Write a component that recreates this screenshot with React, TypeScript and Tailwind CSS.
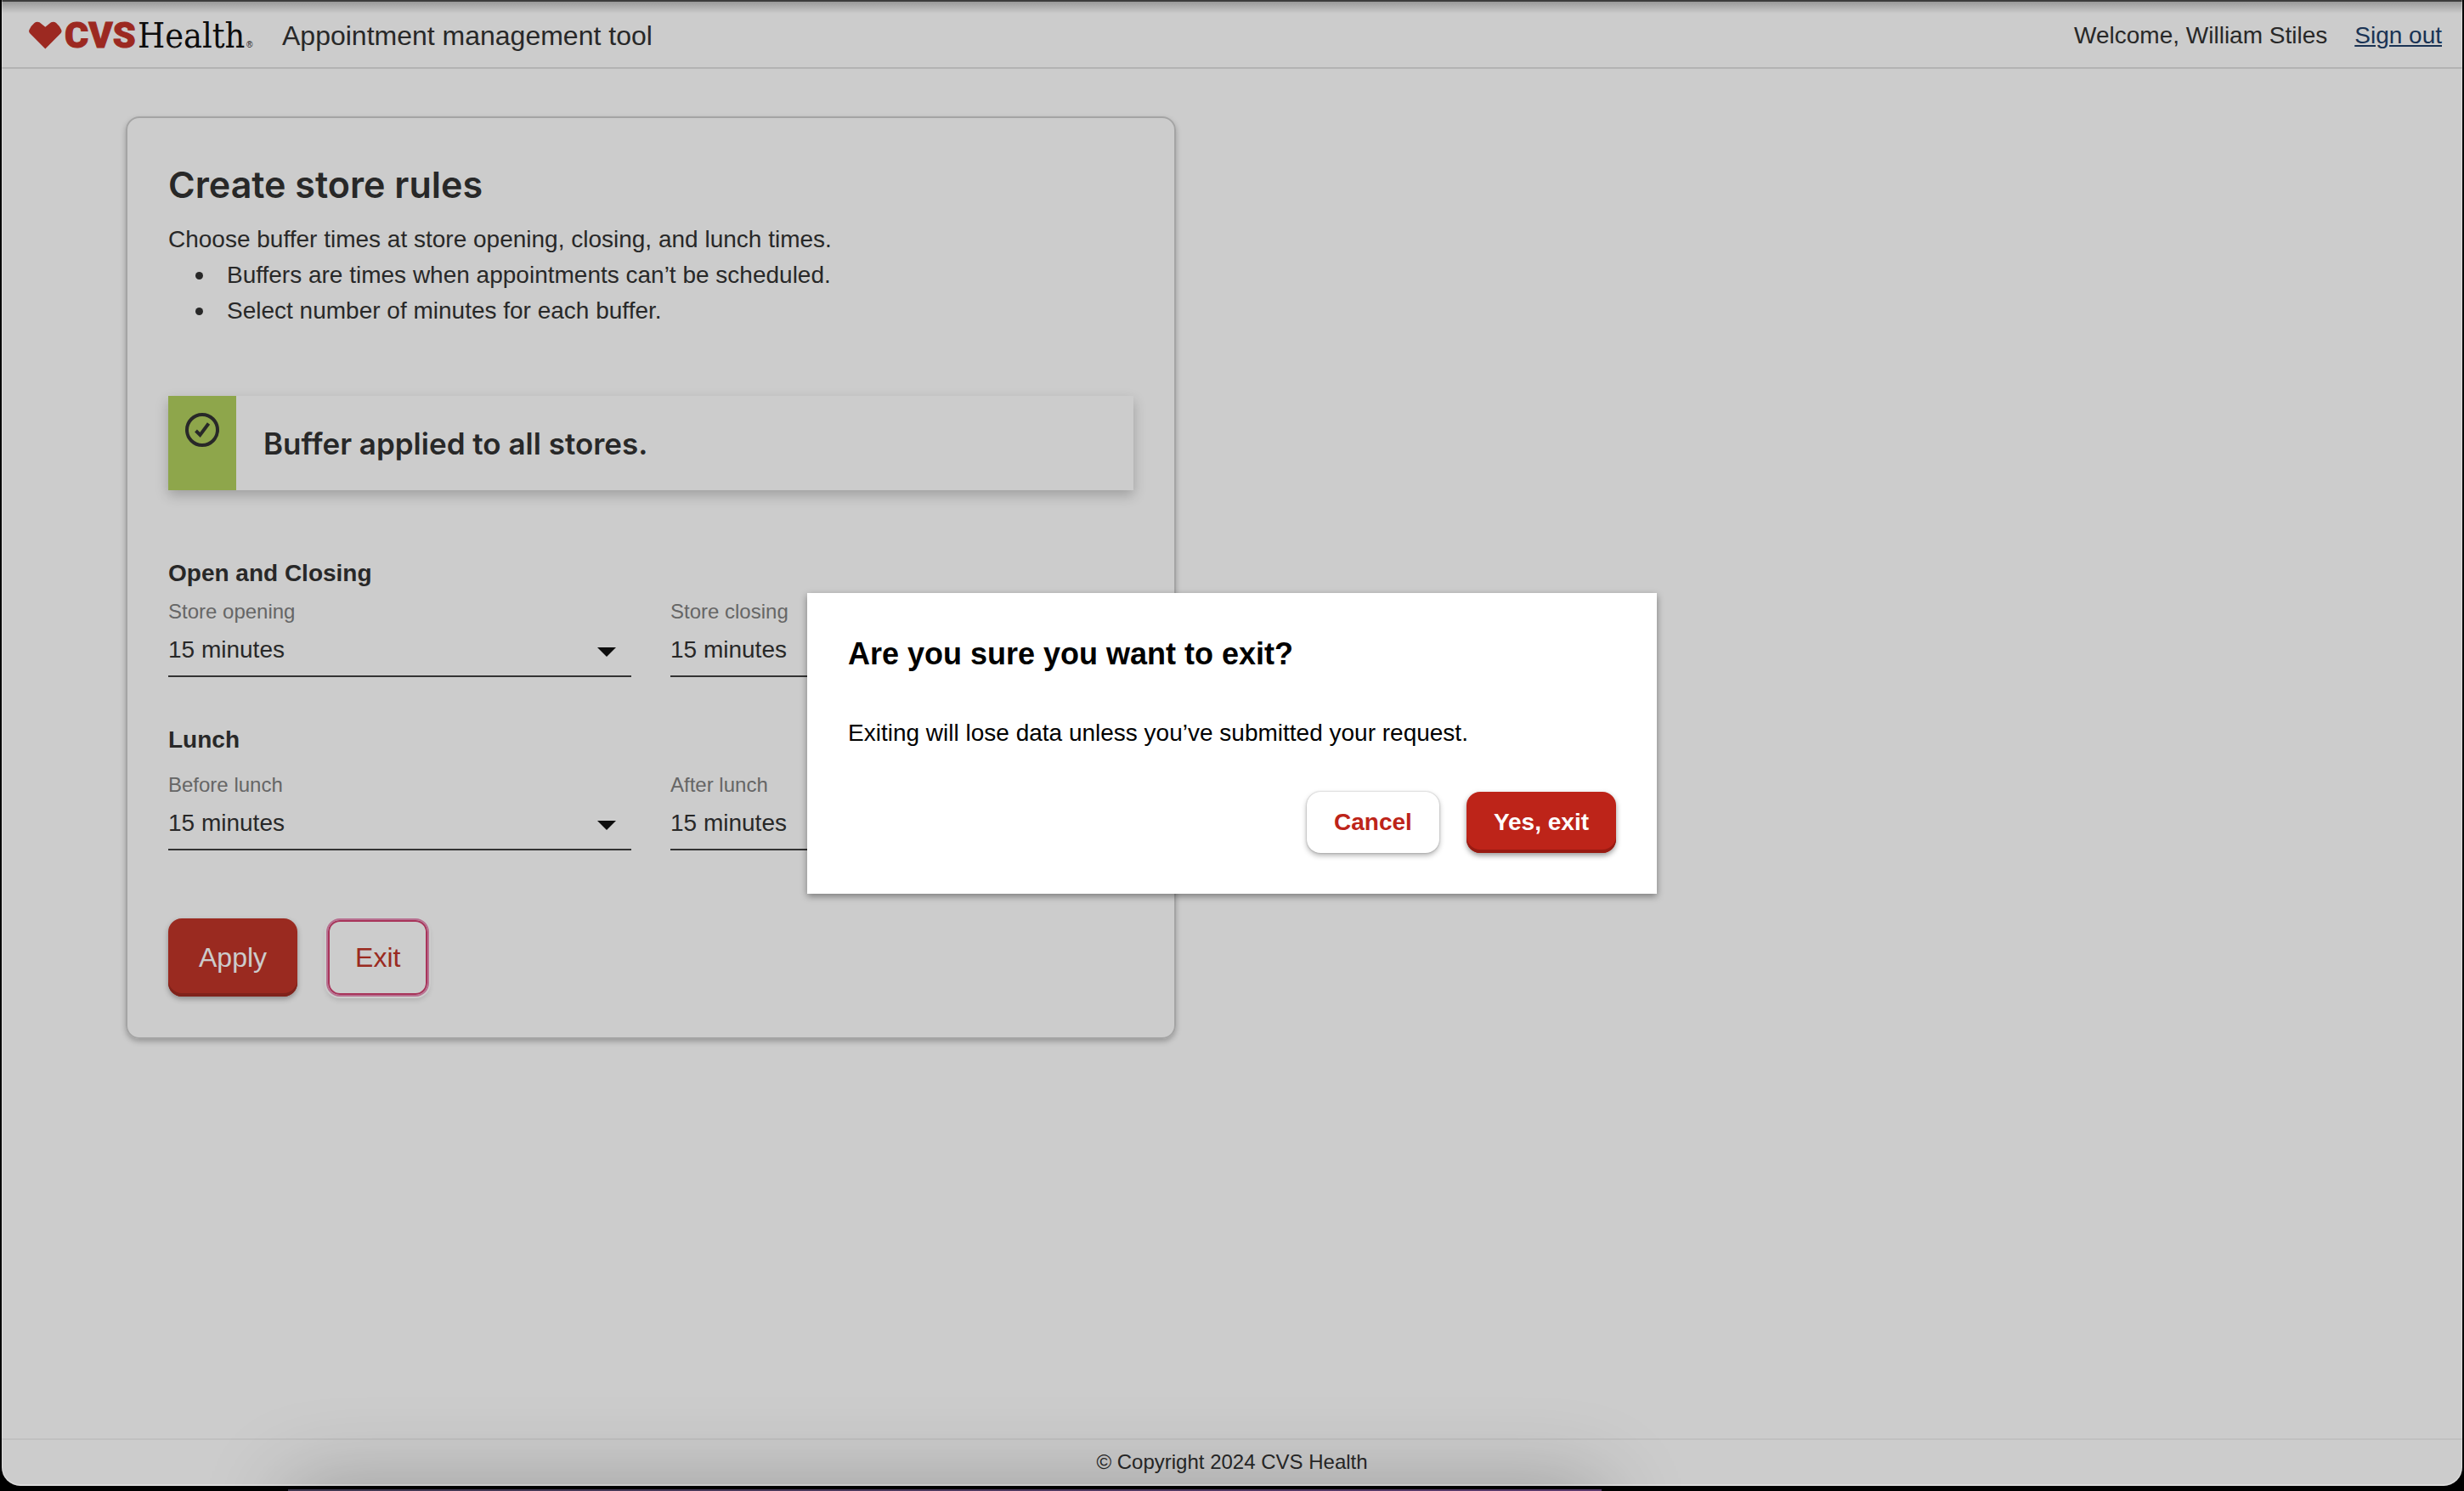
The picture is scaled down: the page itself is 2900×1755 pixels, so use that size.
import React from "react";

function Logo() {
  return (
    <svg
      role="img"
      aria-label="CVS Health"
      className="h-[60px] w-[266px] shrink-0"
      viewBox="0 0 266 60"
    >
      <path
        transform="translate(-1 8)"
        d="M20.300 37.500L2.200 19.300Q0.300 17.200 1.600 14.700Q3.600 10.400 7.500 7Q10 4.900 13.500 6.200L20.300 11.800L27.100 6.200Q30.600 4.900 33.100 7Q37 10.400 39 14.700Q40.300 17.200 38.400 19.300Z"
        fill="#c3342a"
      />
      <text
        x="42"
        y="44"
        fill="#c3342a"
        stroke="#c3342a"
        strokeWidth="1"
        className="font-['Roboto'] text-[43px] font-black"
      >
        CVS
      </text>
      <text
        x="128"
        y="44"
        fill="#111111"
        className="font-['DejaVu_Serif_Condensed','DejaVu_Serif',serif] text-[41px]"
      >
        Health
      </text>
      <text x="256" y="44" fill="#111111" className="font-['Liberation_Sans'] text-[10px]">
        ®
      </text>
    </svg>
  );
}

function MinutesSelect({ id, label }: { id: string; label: string }) {
  return (
    <div className="flex flex-col">
      <label htmlFor={id} className="text-[24px] leading-[30px] text-[#808080]">
        {label}
      </label>
      <div className="relative">
        <select
          id={id}
          defaultValue="15"
          className="block h-[62px] w-full appearance-none border-b-2 border-[#404040] bg-transparent text-[28px] text-[#333333]"
        >
          <option value="0">0 minutes</option>
          <option value="15">15 minutes</option>
          <option value="30">30 minutes</option>
        </select>
        <svg
          aria-hidden="true"
          viewBox="0 0 22 11"
          className="pointer-events-none absolute top-[27px] right-[18px] h-[11px] w-[22px]"
        >
          <path d="M0 0H22L11 11Z" fill="#111111" />
        </svg>
      </div>
    </div>
  );
}

function Bullet({ children }: { children: React.ReactNode }) {
  return (
    <li className="flex items-center gap-7 before:size-[9px] before:rounded-full before:bg-[#333333]">
      {children}
    </li>
  );
}

export default function App() {
  return (
    <div className="flex min-h-screen flex-col bg-black px-[2px] pb-[6px] font-['Liberation_Sans',Arial,sans-serif] text-[28px] text-[#333333]">
      <div className="relative flex grow flex-col overflow-hidden rounded-b-[22px] bg-white">
        <header className="flex h-[81px] items-center border-b-2 border-[#e0e0e0] pt-1 pr-6 pl-8">
          <Logo />
          <p className="ml-8 text-[32px] leading-10">Appointment management tool</p>
          <div className="ml-auto flex items-center gap-8 leading-10">
            <span>Welcome, William Stiles</span>
            <a href="#sign-out" className="text-[#21406a] underline decoration-2 underline-offset-2">
              Sign out
            </a>
          </div>
        </header>

        <main className="grow px-[146px] pt-14">
          <section className="w-full max-w-[1236px] rounded-2xl border-2 border-[#cecece] p-12 shadow-[0_3px_6px_rgba(0,0,0,0.25)]">
            <h1 className="font-['Inter'] text-[43px] leading-[60px] font-semibold">
              Create store rules
            </h1>
            <p className="mt-[14px] leading-[42px]">
              Choose buffer times at store opening, closing, and lunch times.
            </p>
            <ul className="pl-8 leading-[42px]">
              <Bullet>Buffers are times when appointments can’t be scheduled.</Bullet>
              <Bullet>Select number of minutes for each buffer.</Bullet>
            </ul>

            <div
              role="status"
              className="mt-[79px] flex min-h-[111px] shadow-[0_6px_14px_rgba(0,0,0,0.22)]"
            >
              <div className="flex w-20 shrink-0 justify-center bg-[#b2d05e] pt-5">
                <svg aria-hidden="true" viewBox="0 0 40 40" className="h-10 w-10" fill="none" stroke="#333333">
                  <circle cx="20" cy="20" r="18" strokeWidth="4" />
                  <path d="M12.500 21L17.500 26L27.500 12.500" strokeWidth="4" />
                </svg>
              </div>
              <p className="flex grow items-center bg-white px-8 font-['Inter'] text-[35px] leading-12 font-semibold">
                Buffer applied to all stores.
              </p>
            </div>

            <h2 className="mt-20 leading-9 font-bold">Open and Closing</h2>
            <div className="mt-3 grid grid-cols-2 gap-[46px]">
              <MinutesSelect id="opening" label="Store opening" />
              <MinutesSelect id="closing" label="Store closing" />
            </div>

            <h2 className="mt-14 leading-9 font-bold">Lunch</h2>
            <div className="mt-5 grid grid-cols-2 gap-[46px]">
              <MinutesSelect id="before" label="Before lunch" />
              <MinutesSelect id="after" label="After lunch" />
            </div>

            <div className="mt-20 flex gap-[34px] text-[32px]">
              <button
                type="button"
                className="h-[92px] rounded-2xl bg-[#c13528] px-9 text-white shadow-[inset_0_-4px_0_#a02c22,0_3px_6px_rgba(0,0,0,0.3)]"
              >
                Apply
              </button>
              <button
                type="button"
                className="h-[92px] rounded-2xl border-2 border-[#e68cb5] bg-white px-8 text-[#c13528] shadow-[inset_0_0_0_2px_#d24171,0_0_0_2px_#ffffff,0_4px_6px_rgba(0,0,0,0.15)]"
              >
                Exit
              </button>
            </div>
          </section>
        </main>

        <footer className="flex h-[56px] items-center justify-center border-t-2 border-[#f0f0f0] pb-[2px] text-[24px] leading-8">
          © Copyright 2024 CVS Health
        </footer>

        <div className="absolute inset-0 flex items-center justify-center bg-black/20">
          <div
            role="dialog"
            aria-modal="true"
            aria-labelledby="exit-title"
            className="w-[1000px] max-w-full bg-white p-12 text-black shadow-[0_3px_8px_rgba(0,0,0,0.4)]"
          >
            <h2 id="exit-title" className="text-[36px] leading-12 font-bold">
              Are you sure you want to exit?
            </h2>
            <p className="mt-12 leading-[42px]">
              Exiting will lose data unless you’ve submitted your request.
            </p>
            <div className="mt-12 flex justify-end gap-8 font-bold">
              <button
                type="button"
                className="h-[72px] rounded-2xl bg-white px-8 text-[#bd2419] shadow-[0_0_2px_rgba(0,0,0,0.3),0_3px_6px_rgba(0,0,0,0.3)]"
              >
                Cancel
              </button>
              <button
                type="button"
                className="h-[72px] rounded-2xl bg-[#bd2419] px-8 text-white shadow-[inset_0_-4px_0_#981b12,0_3px_6px_rgba(0,0,0,0.4)]"
              >
                Yes, exit
              </button>
            </div>
          </div>
        </div>

        <div className="pointer-events-none absolute inset-x-0 top-0 h-4 border-t-2 border-[#3c3c3c] bg-linear-to-b from-black/25 to-transparent" />
        <div className="pointer-events-none absolute top-full right-[35%] left-[11.700%] h-24 shadow-[0_0_100px_rgba(0,0,0,0.25)]" />
        <div className="pointer-events-none absolute inset-0 rounded-b-[22px] border-x border-b-2 border-white/30" />
      </div>
      <div className="pointer-events-none absolute right-[35%] bottom-0 left-[11.700%] h-[2px] bg-linear-to-r from-[#3f3850] to-[#5a3a6c]" />
    </div>
  );
}
